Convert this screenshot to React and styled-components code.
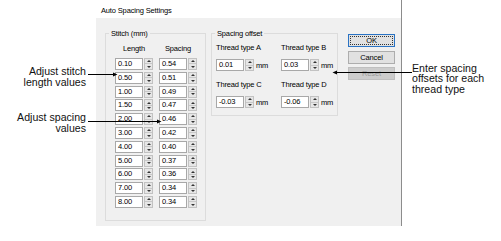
import React from 'react';
import styled, { createGlobalStyle, css } from 'styled-components';

const GlobalStyle = createGlobalStyle`
  html, body {
    margin: 0;
    padding: 0;
    background: #ffffff;
  }
`;

const Page = styled.div`
  position: relative;
  display: flex;
  width: 501px;
  height: 241px;
  overflow: hidden;
  background: #ffffff;
  font-family: "Liberation Sans", Arial, sans-serif;
  color: #111;
`;

const Notes = styled.div`
  box-sizing: border-box;
  display: flex;
  flex-direction: column;
  font-size: 10.6px;
  line-height: 11px;
  ${p => p.$side === 'left' ? css`
    width: 96px;
    padding: 66px 10px 0 0;
    gap: 24px;
    text-align: right;
  ` : css`
    flex: 1;
    padding: 62.5px 0 0 10px;
    line-height: 10.6px;
  `}
`;

const Dialog = styled.div`
  box-sizing: border-box;
  width: 306px;
  height: 226px;
  display: flex;
  flex-direction: column;
  border-right: 1px solid #8c8c8c;
  font-size: 7.5px;
  letter-spacing: -0.15px;
  color: #000;
`;

const TitleBar = styled.div`
  height: 18px;
  box-sizing: border-box;
  padding: 2px 0 0 5px;
  display: flex;
  align-items: center;
  background: #ffffff;
`;

const Body = styled.div`
  flex: 1;
  background: #f0f0f0;
  display: flex;
  align-items: flex-start;
  padding: 10.5px 0 0 9px;
`;

const Group = styled.fieldset`
  box-sizing: border-box;
  margin: 0 0 0 ${p => p.$ml || 0}px;
  padding: 0;
  width: ${p => p.$w}px;
  height: ${p => p.$h}px;
  border: 1px solid #dcdcdc;
  min-width: 0;
`;

const Legend = styled.legend`
  line-height: 9px;
  padding: 0 2px;
  margin-left: 3px;
`;

const StitchGrid = styled.div`
  display: grid;
  grid-template-columns: 38px 38px;
  column-gap: 6px;
  row-gap: 1.8px;
  padding: 6.5px 0 0 9px;
`;

const ColHead = styled.div`
  line-height: 10px;
  text-align: center;
  margin-bottom: 2.2px;
`;

const Spin = styled.div`
  display: flex;
  align-items: center;
  height: 12px;
`;

const Field = styled.div`
  box-sizing: border-box;
  width: 28px;
  height: 12px;
  border: 1px solid #a8a8a8;
  background: #ffffff;
  padding-left: 2px;
  line-height: 10px;
  white-space: nowrap;
`;

const Arrows = styled.div`
  box-sizing: border-box;
  width: 9px;
  height: 12px;
  margin-left: 1px;
  border: 1px solid #c2c2c2;
  background: #e6e6e6;
  display: flex;
  flex-direction: column;
`;

const ArrowHalf = styled.div`
  flex: 1;
  display: flex;
  align-items: center;
  justify-content: center;
  border-top: ${p => p.$dir === 'down' ? '1px solid #c8c8c8' : 'none'};

  &::after {
    content: '';
    border-left: 2px solid transparent;
    border-right: 2px solid transparent;
    ${p => p.$dir === 'up'
      ? 'border-bottom: 2px solid #333;'
      : 'border-top: 2px solid #333;'}
  }
`;

const Unit = styled.span`
  margin-left: 2px;
`;

const OffsetGrid = styled.div`
  display: grid;
  grid-template-columns: 65px auto;
  row-gap: 9px;
  padding: 5.5px 0 0 4px;
`;

const OffsetCell = styled.div`
  display: flex;
  flex-direction: column;
`;

const CellLabel = styled.div`
  line-height: 10px;
  margin-bottom: 6px;
  white-space: nowrap;
`;

const ButtonCol = styled.div`
  display: flex;
  flex-direction: column;
  gap: 3.5px;
  margin: 5.5px 0 0 10px;
`;

const Button = styled.div`
  box-sizing: border-box;
  width: 47px;
  height: 13px;
  display: flex;
  align-items: center;
  justify-content: center;
  border: 1px solid #adadad;
  background: #e1e1e1;
  ${p => p.$primary && css`
    border-color: #2a73c4;
    outline: 1px dotted #333;
    outline-offset: -3px;
  `}
  ${p => p.$disabled && css`
    background: #cccccc;
    border-color: #bfbfbf;
    color: #9a9a9a;
  `}
`;

const Overlay = styled.svg`
  position: absolute;
  left: 0;
  top: 0;
  pointer-events: none;
`;

const stitchRows = [
  ['0.10', '0.54'],
  ['0.50', '0.51'],
  ['1.00', '0.49'],
  ['1.50', '0.47'],
  ['2.00', '0.46'],
  ['3.00', '0.42'],
  ['4.00', '0.40'],
  ['5.00', '0.37'],
  ['6.00', '0.36'],
  ['7.00', '0.34'],
  ['8.00', '0.34'],
];

const offsets = [
  ['Thread type A', '0.01'],
  ['Thread type B', '0.03'],
  ['Thread type C', '-0.03'],
  ['Thread type D', '-0.06'],
];

function SpinBox({ value }) {
  return (
    <Spin>
      <Field>{value}</Field>
      <Arrows>
        <ArrowHalf $dir="up" />
        <ArrowHalf $dir="down" />
      </Arrows>
    </Spin>
  );
}

export default function App() {
  return (
    <>
      <GlobalStyle />
      <Page>
        <Notes $side="left">
          <div>Adjust stitch<br />length values</div>
          <div>Adjust spacing<br />values</div>
        </Notes>

        <Dialog>
          <TitleBar>Auto Spacing Settings</TitleBar>
          <Body>
            <Group $w={101} $h={192}>
              <Legend>Stitch (mm)</Legend>
              <StitchGrid>
                <ColHead>Length</ColHead>
                <ColHead>Spacing</ColHead>
                {stitchRows.map(([len, sp]) => (
                  <React.Fragment key={len}>
                    <SpinBox value={len} />
                    <SpinBox value={sp} />
                  </React.Fragment>
                ))}
              </StitchGrid>
            </Group>

            <Group $w={127} $h={87.5} $ml={5}>
              <Legend>Spacing offset</Legend>
              <OffsetGrid>
                {offsets.map(([label, value]) => (
                  <OffsetCell key={label}>
                    <CellLabel>{label}</CellLabel>
                    <Spin>
                      <SpinBox value={value} />
                      <Unit>mm</Unit>
                    </Spin>
                  </OffsetCell>
                ))}
              </OffsetGrid>
            </Group>

            <ButtonCol>
              <Button $primary>OK</Button>
              <Button>Cancel</Button>
              <Button $disabled>Reset</Button>
            </ButtonCol>
          </Body>
        </Dialog>

        <Notes $side="right">
          <div>Enter spacing<br />offsets for each<br />thread type</div>
        </Notes>

        <Overlay width="501" height="241" viewBox="0 0 501 241">
          <g stroke="#000" strokeWidth="1">
            <line x1="88" y1="74.5" x2="114" y2="74.5" />
            <line x1="88" y1="121.5" x2="158" y2="121.5" />
            <line x1="336" y1="72.5" x2="412" y2="72.5" />
          </g>
          <g fill="#000">
            <polygon points="117.5,74.5 113,72.5 113,76.5" />
            <polygon points="161.5,121.5 157,119.5 157,123.5" />
            <polygon points="332.5,72.5 337,70.5 337,74.5" />
          </g>
        </Overlay>
      </Page>
    </>
  );
}
